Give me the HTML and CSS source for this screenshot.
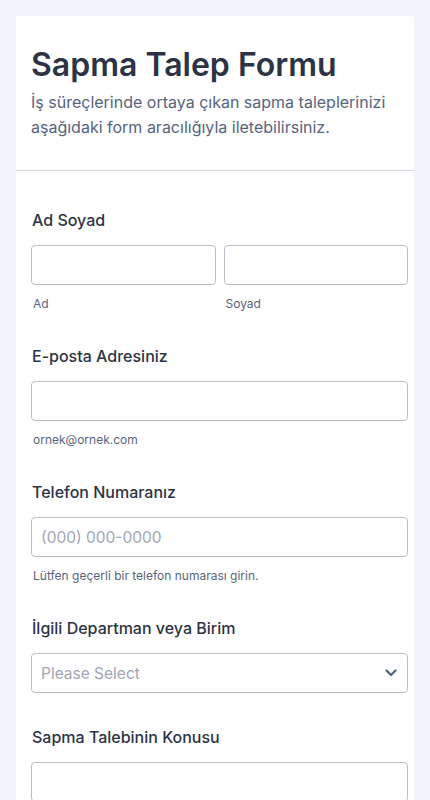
FILE: index.html
```html
<!DOCTYPE html>
<html lang="tr">
<head>
  <meta charset="UTF-8">
  <meta name="viewport" content="width=device-width, initial-scale=1.0">
  <title>Sapma Talep Formu</title>
  <link rel="stylesheet" href="styles.css">
</head>
<body>
  <div class="card">
    <div class="form-header">
      <h1>Sapma Talep Formu</h1>
      <p class="subheader">İş süreçlerinde ortaya çıkan sapma taleplerinizi aşağıdaki form aracılığıyla iletebilirsiniz.</p>
    </div>

    <div class="form-body">
      <div class="field">
        <label class="field-label">Ad Soyad</label>
        <div class="name-row">
          <div class="name-col">
            <input class="text-input" type="text">
            <span class="sublabel">Ad</span>
          </div>
          <div class="name-col">
            <input class="text-input" type="text">
            <span class="sublabel">Soyad</span>
          </div>
        </div>
      </div>

      <div class="field">
        <label class="field-label">E-posta Adresiniz</label>
        <input class="text-input" type="email">
        <span class="sublabel">ornek@ornek.com</span>
      </div>

      <div class="field">
        <label class="field-label">Telefon Numaranız</label>
        <input class="text-input" type="tel" placeholder="(000) 000-0000">
        <span class="sublabel">Lütfen geçerli bir telefon numarası girin.</span>
      </div>

      <div class="field">
        <label class="field-label">İlgili Departman veya Birim</label>
        <div class="select-wrap">
          <select class="text-input select-input">
            <option>Please Select</option>
          </select>
          <svg class="chevron" width="12" height="8" viewBox="0 0 12 8">
            <path d="M1.5 1.5 L6 6 L10.5 1.5" fill="none" stroke="#57647e" stroke-width="2.2" stroke-linecap="round" stroke-linejoin="round"/>
          </svg>
        </div>
      </div>

      <div class="field">
        <label class="field-label">Sapma Talebinin Konusu</label>
        <input class="text-input" type="text">
      </div>
    </div>
  </div>
</body>
</html>
```

FILE: styles.css
```css
*{
  margin: 0;
  padding: 0;
  box-sizing: border-box;
}
body{
  background-color: #f3f3fe;
  font-family: Inter, "Noto Sans", sans-serif;
  color: #2c3345;
  padding: 16px 16px 0 16px;
}
.card{
  background-color: #fff;
  border-radius: 3px;
  min-height: 900px;
}
.form-header{
  padding: 29px 20px 30px 15px;
  border-bottom: 1px solid #d8dae9;
}
.form-header h1{
  font-size: 32px;
  font-weight: 600;
  line-height: 40px;
  color: #2c3345;
}
.subheader{
  font-size: 16px;
  line-height: 25px;
  color: #57647e;
  margin-top: 5px;
}
.form-body{
  padding: 39px 6px 0 15px;
}
.field{
  display: flex;
  flex-direction: column;
  margin-bottom: 34px;
}
.field-label{
  font-size: 16px;
  font-weight: 500;
  line-height: 20px;
  margin: 0 0 15px 1px;
}
.name-row{
  display: flex;
  gap: 8px;
}
.name-col{
  flex: 1;
  display: flex;
  flex-direction: column;
}
.text-input{
  width: 100%;
  height: 40px;
  border: 1px solid #b8bdc9;
  border-radius: 4px;
  background: #fff;
  font-family: inherit;
  font-size: 15.5px;
  color: #2c3345;
  padding: 0 9px;
}
.text-input::placeholder{
  color: #a0a6b6;
}
.sublabel{
  font-size: 12px;
  line-height: 16px;
  color: #57647e;
  margin: 11px 0 0 2px;
}
.select-wrap{
  position: relative;
}
.select-input{
  appearance: none;
  -webkit-appearance: none;
  color: #a0a6b6;
}
.chevron{
  position: absolute;
  right: 11px;
  top: 16px;
}
```
